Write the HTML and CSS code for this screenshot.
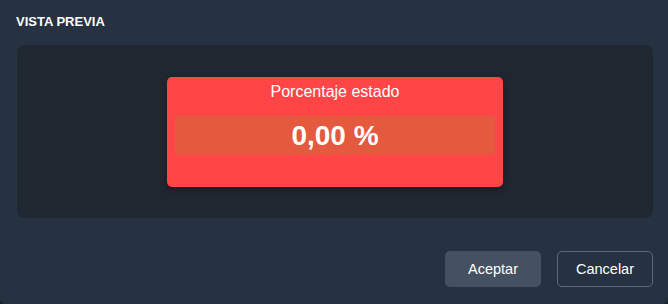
FILE: index.html
```html
<!DOCTYPE html>
<html lang="es">
<head>
    <meta charset="UTF-8">
    <title>Vista previa</title>
    <link rel="stylesheet" href="styles.css">
</head>
<body>
    <div class="dialog">
        <h2 class="section-title">VISTA PREVIA</h2>

        <div class="preview">
            <div class="kpi-card">
                <div class="kpi-title">Porcentaje estado</div>
                <div class="kpi-value">0,00 %</div>
            </div>
        </div>

        <div class="actions">
            <button class="btn btn-primary">Aceptar</button>
            <button class="btn btn-outline">Cancelar</button>
        </div>
    </div>
</body>
</html>
```

FILE: styles.css
```css
html, body {
    margin: 0;
    height: 100%;
    background: #1b2229;
}

body {
    font-family: Arial, "Liberation Sans", sans-serif;
}

.dialog {
    box-sizing: border-box;
    height: 304px;
    background: #263141;
    border-radius: 0 0 6px 6px;
    padding: 15px 15px 0 17px;
    display: flex;
    flex-direction: column;
}

.section-title {
    margin: 0 0 16px -1px;
    font-size: 13px;
    font-weight: bold;
    color: #ffffff;
    line-height: 14px;
}

.preview {
    height: 173px;
    background: #1f2731;
    border-radius: 8px;
    display: flex;
    justify-content: center;
    padding-top: 32px;
    box-sizing: border-box;
}

.kpi-card {
    width: 336px;
    height: 110px;
    box-sizing: border-box;
    background: #ff4545;
    border-radius: 5px;
    box-shadow: 0 2px 6px rgba(0, 0, 0, 0.35);
    padding: 6px 8px 0;
    color: #ffffff;
    text-align: center;
}

.kpi-title {
    font-size: 16px;
    line-height: 18px;
    margin-bottom: 15px;
}

.kpi-value {
    height: 39px;
    line-height: 39px;
    background: #e5593e;
    border-radius: 3px;
    font-size: 28px;
    font-weight: bold;
}

.actions {
    display: flex;
    justify-content: flex-end;
    gap: 16px;
    margin-top: 33px;
}

.btn {
    width: 96px;
    height: 36px;
    border-radius: 5px;
    font-family: inherit;
    font-size: 14.5px;
    color: #ffffff;
    cursor: pointer;
}

.btn-primary {
    background: #455161;
    border: none;
}

.btn-outline {
    background: transparent;
    border: 1px solid #5d6877;
}
```
